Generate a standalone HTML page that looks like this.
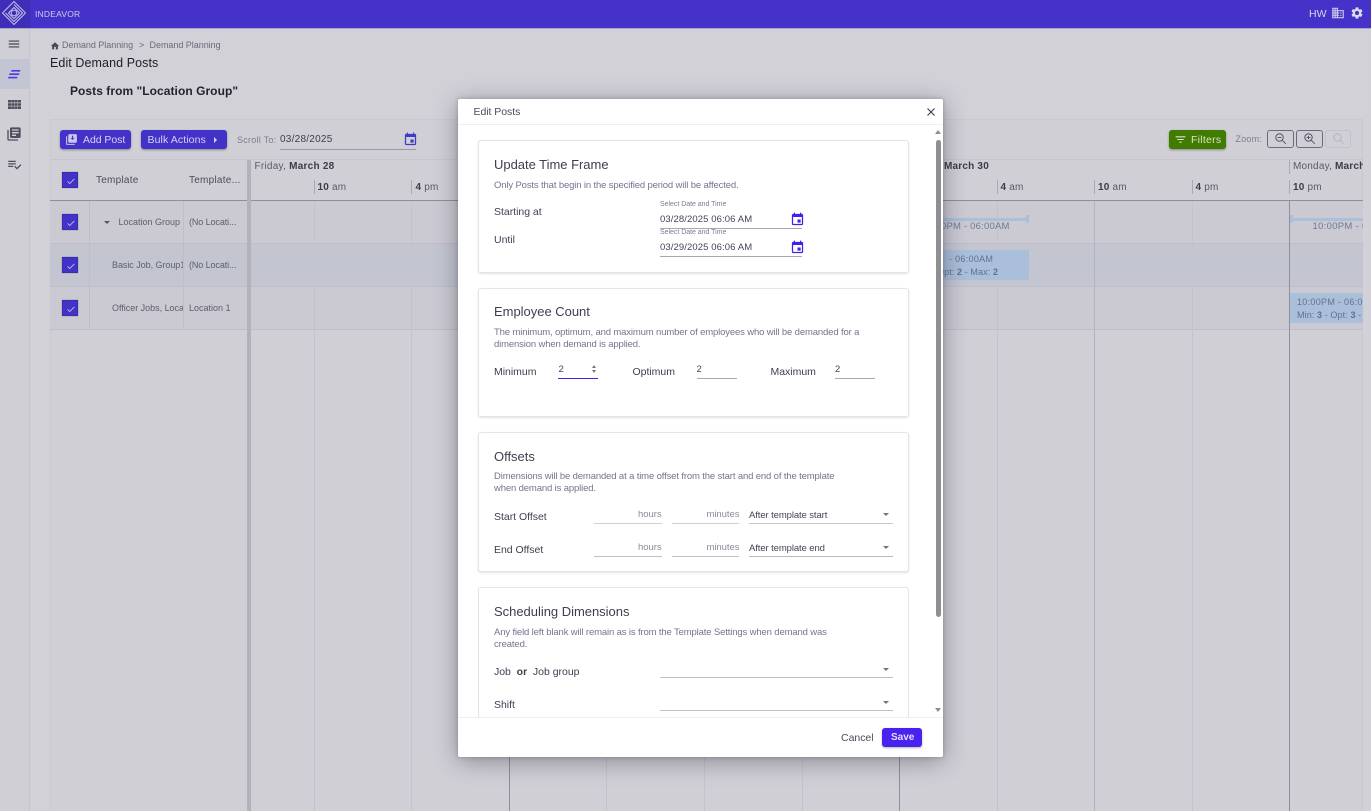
<!DOCTYPE html>
<html><head><meta charset="utf-8"><title>Edit Demand Posts</title>
<style>
html,body{margin:0;padding:0}
body{width:1371px;height:811px;position:relative;overflow:hidden;background:#d2d1d8;font-family:"Liberation Sans",sans-serif;color:#3e3d4d}
.a{position:absolute}
.t{position:absolute;white-space:nowrap;line-height:14px}
.l{position:absolute}
svg{position:absolute;display:block}
.chk{position:absolute;left:62px;width:16px;height:16px;background:#4332c8;border:.5px solid #3a2cac;box-shadow:0 0 1px #777;box-sizing:border-box}
.chk svg{left:2.500px;top:2.500px}
.card{position:absolute;left:478px;width:431px;background:#fff;border:1px solid #e3e3e8;box-shadow:0 1px 2px rgba(0,0,0,.12);border-radius:3px;box-sizing:border-box}
.h{font-size:13px;color:#3f3e50;letter-spacing:-.02px}
.d{font-size:9.500px;color:#73748f;letter-spacing:-.14px}
.lb{font-size:10.500px;color:#3f3e50;letter-spacing:-.02px}
.v{font-size:9.500px;color:#44435a;letter-spacing:.1px}
.u{position:absolute;height:1px;background:#a8a8b4}
.ph{font-size:9.500px;color:#8b8b9b;letter-spacing:-.05px}
.sel{position:absolute;width:0;height:0;border-left:3.500px solid transparent;border-right:3.500px solid transparent;border-top:3.500px solid #74747f}
.g{background:#c4c3cd}
.gd{background:#8f8e9a}
.bt{position:absolute;background:#4332c8;border-radius:3px;box-shadow:0 1px 2px rgba(0,0,0,.35);color:#d6d3ef;font-size:10.500px}
</style></head><body>

<!-- top bar -->
<div class="a" style="left:0;top:0;width:1371px;height:29px;background:#4432c9;border-bottom:1px solid #a9a6cb;box-sizing:border-box"></div>
<div class="a" style="left:0;top:0;width:30px;height:29px;background:#3f2fb6;border-bottom:1px solid #a9a6cb;box-sizing:border-box"></div>
<svg style="left:1px;top:0" width="26" height="26" viewBox="0 0 26 26" fill="none" stroke="#c9c6e8" stroke-width=".9" stroke-linejoin="round">
<path d="M13 1.500L24.500 13 13 24.500 1.500 13zM13 4.500L21.500 13 13 21.500 4.500 13"/>
<path d="M13 7.500L18.500 13 13 18.500 7.500 13z"/><circle cx="13" cy="13" r="2.800"/></svg>
<div class="t" style="left:35px;top:7px;font-size:8.500px;color:#d0ccee;letter-spacing:.2px">INDEAVOR</div>
<div class="t" style="left:1309px;top:7px;font-size:10.500px;color:#d8d5f0">HW</div>
<svg style="left:1331px;top:6px" width="14" height="14" viewBox="0 0 24 24" fill="#c9c6ea"><path d="M12 7V3H2v18h20V7H12zM6 19H4v-2h2v2zm0-4H4v-2h2v2zm0-4H4V9h2v2zm0-4H4V5h2v2zm4 12H8v-2h2v2zm0-4H8v-2h2v2zm0-4H8V9h2v2zm0-4H8V5h2v2zm10 12h-8v-2h2v-2h-2v-2h2v-2h-2V9h8v10zm-2-8h-2v2h2v-2zm0 4h-2v2h2v-2z"/></svg>
<svg style="left:1350px;top:6px" width="14" height="14" viewBox="0 0 24 24" fill="#dddaf3"><path d="M19.140 12.940c.04-.3.06-.61.06-.94 0-.32-.02-.64-.07-.94l2.030-1.580c.18-.14.23-.41.12-.61l-1.920-3.320c-.12-.22-.37-.29-.59-.22l-2.390.96c-.5-.38-1.030-.7-1.620-.94l-.36-2.540c-.04-.24-.24-.41-.48-.41h-3.840c-.24 0-.43.17-.47.41l-.36 2.540c-.59.24-1.130.57-1.620.94l-2.390-.96c-.22-.08-.47 0-.59.22L2.740 8.870c-.12.21-.08.47.12.61l2.030 1.580c-.05.3-.09.63-.09.94s.02.64.07.94l-2.030 1.580c-.18.14-.23.41-.12.61l1.920 3.320c.12.22.37.29.59.22l2.390-.96c.5.38 1.030.7 1.620.94l.36 2.540c.05.24.24.41.48.41h3.840c.24 0 .44-.17.47-.41l.36-2.540c.59-.24 1.130-.56 1.620-.94l2.390.96c.22.08.47 0 .59-.22l1.920-3.320c.12-.22.07-.47-.12-.61l-2.010-1.580zM12 15.600c-1.980 0-3.600-1.620-3.600-3.600s1.620-3.600 3.600-3.600 3.600 1.620 3.600 3.600-1.620 3.600-3.600 3.600z"/></svg>

<!-- sidebar -->
<div class="a" style="left:0;top:29px;width:30px;height:782px;background:#d0cfd6;border-right:1px solid #c6c5cd;box-sizing:border-box"></div>
<div class="a" style="left:0;top:59px;width:30px;height:30px;background:#c4c5d4"></div>
<svg style="left:7px;top:37px" width="14" height="14" viewBox="0 0 24 24" fill="#45444f"><path d="M3 18h18v-2H3v2zm0-5h18v-2H3v2zm0-7v2h18V6H3z"/></svg>
<svg style="left:8px;top:70px" width="13" height="9" viewBox="0 0 13 9" fill="#4a3ae0"><path d="M3.500 0h9l-.5 1.600H3zM1.500 3.400h10l-.5 1.600H1zM.5 6.800h9L9 8.400H0z"/></svg>
<svg style="left:8px;top:100px" width="13" height="9" viewBox="0 0 13 9" fill="#4f4e5c"><path d="M0 0h3v2.500H0zM3.300 0h3v2.500h-3zM6.600 0h3v2.500h-3zM10 0h3v2.500h-3zM0 3.200h3v2.500H0zM3.300 3.200h3v2.500h-3zM6.600 3.200h3v2.500h-3zM10 3.200h3v2.500h-3zM0 6.400h3V9H0zM3.300 6.400h3V9h-3zM6.600 6.400h3V9h-3zM10 6.400h3V9h-3z"/></svg>
<svg style="left:6px;top:126px" width="16" height="16" viewBox="0 0 24 24" fill="#4f4e5c"><path d="M4 6H2v14c0 1.100.9 2 2 2h14v-2H4V6zm16-4H8c-1.100 0-2 .9-2 2v12c0 1.100.9 2 2 2h12c1.100 0 2-.9 2-2V4c0-1.100-.9-2-2-2zm-1 9H9V9h10v2zm-4 4H9v-2h6v2zm4-8H9V5h10v2z"/></svg>
<svg style="left:7px;top:157px" width="15" height="15" viewBox="0 0 24 24" fill="#4f4e5c"><path d="M14 10H2v2h12v-2zm0-4H2v2h12V6zM2 16h8v-2H2v2zm19.500-4.500L23 13l-6.990 7-4.510-4.500L13 14l3.010 3 5.490-5.500z"/></svg>

<!-- breadcrumbs -->
<svg style="left:49.500px;top:40.500px" width="10" height="10" viewBox="0 0 24 24" fill="#4c4b58"><path d="M10 20v-6h4v6h5v-8h3L12 3 2 12h3v8z"/></svg>
<div class="t" style="left:62px;top:38px;font-size:9px;color:#6a6a79;letter-spacing:-.03px">Demand Planning</div>
<div class="t" style="left:139px;top:38px;font-size:9px;color:#6a6a79">&gt;</div>
<div class="t" style="left:149.500px;top:38px;font-size:9px;color:#6a6a79;letter-spacing:-.03px">Demand Planning</div>
<div class="t" style="left:50px;top:56px;font-size:12.500px;color:#1f1e26;letter-spacing:.08px">Edit Demand Posts</div>
<div class="t" style="left:70px;top:84px;font-size:12px;font-weight:bold;color:#24232b;letter-spacing:.05px">Posts from "Location Group"</div>

<!-- panel -->
<div class="a" style="left:50px;top:119px;width:1313px;height:692px;background:#d0cfd6;border:1px solid #cac9d0;border-width:1px 1px 0 1px;box-sizing:border-box"></div>
<div class="l" style="left:50px;top:159px;width:1313px;height:1px;background:#c7c6ce"></div>

<div class="bt" style="left:60px;top:130px;width:71px;height:18.500px"><span class="t" style="left:23px;top:3px;letter-spacing:-.05px">Add Post</span></div>
<svg style="left:65px;top:133px" width="13" height="13" viewBox="0 0 24 24" fill="#c9c6ea"><path d="M4 6H2v14c0 1.100.9 2 2 2h14v-2H4V6zm16-4H8c-1.100 0-2 .9-2 2v12c0 1.100.9 2 2 2h12c1.100 0 2-.9 2-2V4c0-1.100-.9-2-2-2zm-7 3h2v5l2-1.500 0 1.500-3 3-3-3V8.500L13 10z"/></svg>
<div class="bt" style="left:141px;top:130px;width:86px;height:18.500px"><span class="t" style="left:6.500px;top:3px;letter-spacing:.1px">Bulk Actions</span></div>
<div class="a" style="left:214px;top:136.500px;width:0;height:0;border-top:3px solid transparent;border-bottom:3px solid transparent;border-left:3.500px solid #d6d3ef"></div>
<div class="t" style="left:237px;top:133px;font-size:9px;color:#7c7c8b;letter-spacing:.25px">Scroll To:</div>
<div class="t" style="left:280px;top:133px;font-size:10px;color:#3f3e4b;letter-spacing:.25px">03/28/2025</div>
<div class="u" style="left:280px;top:149px;width:136px;background:#9a99a5"></div>
<svg style="left:403px;top:132px" width="15" height="15" viewBox="0 0 24 24" fill="#3f3bc7"><path d="M17 12h-5v5h5v-5zM16 1v2H8V1H6v2H5c-1.110 0-1.990.9-1.990 2L3 19c0 1.100.89 2 2 2h14c1.100 0 2-.9 2-2V5c0-1.100-.9-2-2-2h-1V1h-2zm3 18H5V8h14v11z"/></svg>

<div class="a" style="left:1169px;top:130px;width:57px;height:19px;background:#417c00;border-radius:3px;box-shadow:0 1px 2px rgba(0,0,0,.35)"></div>
<svg style="left:1174px;top:133px" width="13" height="13" viewBox="0 0 24 24" fill="#d7e4c8"><path d="M10 18h4v-2h-4v2zM3 6v2h18V6H3zm3 7h12v-2H6v2z"/></svg>
<div class="t" style="left:1191px;top:133px;font-size:10.500px;color:#d7e4c8;letter-spacing:.25px">Filters</div>
<div class="t" style="left:1235.500px;top:132px;font-size:9px;color:#7c7c8b;letter-spacing:.2px">Zoom:</div>
<div class="a" style="left:1267px;top:130px;width:27px;height:18px;border:1px solid #6c6b7e;border-radius:3px;box-sizing:border-box"></div>
<div class="a" style="left:1296px;top:130px;width:27px;height:18px;border:1px solid #6c6b7e;border-radius:3px;box-sizing:border-box"></div>
<div class="a" style="left:1325px;top:130px;width:26px;height:18px;border:1px solid #c2c1ca;border-radius:3px;box-sizing:border-box"></div>
<svg style="left:1274px;top:132px" width="13" height="13" viewBox="0 0 13 13" fill="none" stroke="#55546a" stroke-width="1"><circle cx="5.500" cy="5.500" r="3.700"/><path d="M8.300 8.300l3.500 3.500M3.700 5.500h3.600"/></svg>
<svg style="left:1303px;top:132px" width="13" height="13" viewBox="0 0 13 13" fill="none" stroke="#55546a" stroke-width="1"><circle cx="5.500" cy="5.500" r="3.700"/><path d="M8.300 8.300l3.500 3.500M3.700 5.500h3.600M5.500 3.700v3.600"/></svg>
<svg style="left:1332px;top:132px" width="13" height="13" viewBox="0 0 13 13" fill="none" stroke="#b4b3bf" stroke-width="1"><circle cx="5.500" cy="5.500" r="3.700"/><path d="M8.300 8.300l3.500 3.500"/></svg>

<!-- grid rows -->
<div class="a" style="left:50px;top:201px;width:1313px;height:42px;background:#cbc9d2"></div>
<div class="a" style="left:50px;top:244px;width:1313px;height:42px;background:#c3c6d1"></div>
<div class="a" style="left:50px;top:287px;width:1313px;height:42px;background:#cbc9d2"></div>
<div class="l" style="left:50px;top:200px;width:1313px;height:1px;background:#8f8e9a"></div>
<div class="l" style="left:50px;top:243px;width:1313px;height:1px;background:#bebdc8"></div>
<div class="l" style="left:50px;top:286px;width:1313px;height:1px;background:#bebdc8"></div>
<div class="l" style="left:50px;top:329px;width:1313px;height:1px;background:#bebdc8"></div>
<div class="l" style="left:89px;top:201px;width:1px;height:128px;background:#bebdc8"></div>
<div class="l" style="left:183px;top:201px;width:1px;height:128px;background:#bebdc8"></div>
<div class="a" style="left:247px;top:160px;width:4px;height:651px;background:#b3b2bb"></div>

<!-- vertical grid lines -->
<div class="l g" style="left:314px;top:201px;width:1px;height:610px"></div>
<div class="l g" style="left:411px;top:201px;width:1px;height:610px"></div>
<div class="l gd" style="left:509px;top:201px;width:1px;height:610px"></div>
<div class="l g" style="left:606px;top:201px;width:1px;height:610px"></div>
<div class="l g" style="left:704px;top:201px;width:1px;height:610px"></div>
<div class="l g" style="left:802px;top:201px;width:1px;height:610px"></div>
<div class="l gd" style="left:899px;top:201px;width:1px;height:610px"></div>
<div class="l g" style="left:997px;top:201px;width:1px;height:610px"></div>
<div class="l" style="left:1094px;top:201px;width:1px;height:610px;background:#b3b2c0"></div>
<div class="l g" style="left:1192px;top:201px;width:1px;height:610px"></div>
<div class="l gd" style="left:1289px;top:201px;width:1px;height:610px"></div>
<div class="l" style="left:314px;top:180px;width:1px;height:14px;background:#a9a8b3"></div>
<div class="l" style="left:411px;top:180px;width:1px;height:14px;background:#a9a8b3"></div>
<div class="l" style="left:997px;top:180px;width:1px;height:14px;background:#a9a8b3"></div>
<div class="l" style="left:1094px;top:180px;width:1px;height:14px;background:#a9a8b3"></div>
<div class="l" style="left:1192px;top:180px;width:1px;height:14px;background:#a9a8b3"></div>
<div class="l" style="left:1289px;top:180px;width:1px;height:14px;background:#a9a8b3"></div>
<div class="l" style="left:1289px;top:160px;width:1px;height:14px;background:#a9a8b3"></div>

<!-- left headers and cells -->
<div class="chk" style="top:172px"><svg width="10" height="10" viewBox="0 0 24 24" fill="none" stroke="#c9c6ea" stroke-width="2"><path d="M4 13l5 5L20 7"/></svg></div>
<div class="chk" style="top:214px"><svg width="10" height="10" viewBox="0 0 24 24" fill="none" stroke="#c9c6ea" stroke-width="2"><path d="M4 13l5 5L20 7"/></svg></div>
<div class="chk" style="top:257px"><svg width="10" height="10" viewBox="0 0 24 24" fill="none" stroke="#c9c6ea" stroke-width="2"><path d="M4 13l5 5L20 7"/></svg></div>
<div class="chk" style="top:300px"><svg width="10" height="10" viewBox="0 0 24 24" fill="none" stroke="#c9c6ea" stroke-width="2"><path d="M4 13l5 5L20 7"/></svg></div>
<div class="t" style="left:96px;top:174px;font-size:10px;color:#4c4b59;letter-spacing:.25px">Template</div>
<div class="t" style="left:189px;top:174px;font-size:10px;color:#4c4b59;letter-spacing:.25px">Template...</div>
<div class="sel" style="left:104px;top:220.500px;border-top-color:#55545f"></div>
<div class="t" style="left:118.500px;top:215px;font-size:9px;color:#5e5d6c;letter-spacing:0">Location Group</div>
<div class="t" style="left:189px;top:215px;font-size:9px;color:#5e5d6c;letter-spacing:-.1px">(No Locati...</div>
<div class="t" style="left:112px;top:258px;font-size:9px;color:#5e5d6c;letter-spacing:-.05px;width:71px;overflow:hidden">Basic Job, Group1</div>
<div class="t" style="left:189px;top:258px;font-size:9px;color:#5e5d6c;letter-spacing:-.1px">(No Locati...</div>
<div class="t" style="left:112px;top:301px;font-size:9px;color:#5e5d6c;letter-spacing:-.02px;width:71px;overflow:hidden">Officer Jobs, Location 1</div>
<div class="t" style="left:189px;top:301px;font-size:9px;color:#5e5d6c;letter-spacing:0">Location 1</div>

<!-- timeline headers -->
<div class="t" style="left:254.500px;top:160px;font-size:10px;color:#5a5967;letter-spacing:.25px">Friday, <b style="color:#3c3b47">March 28</b></div>
<div class="t" style="left:317.500px;top:181px;font-size:10px;color:#5a5967;letter-spacing:.2px"><b style="color:#3c3b47">10</b> am</div>
<div class="t" style="left:415.500px;top:181px;font-size:10px;color:#5a5967;letter-spacing:.2px"><b style="color:#3c3b47">4</b> pm</div>
<div class="t" style="left:944px;top:160px;font-size:10px;font-weight:bold;color:#3c3b47;letter-spacing:.2px">March 30</div>
<div class="t" style="left:1000.500px;top:181px;font-size:10px;color:#5a5967;letter-spacing:.2px"><b style="color:#3c3b47">4</b> am</div>
<div class="t" style="left:1098px;top:181px;font-size:10px;color:#5a5967;letter-spacing:.2px"><b style="color:#3c3b47">10</b> am</div>
<div class="t" style="left:1195.500px;top:181px;font-size:10px;color:#5a5967;letter-spacing:.2px"><b style="color:#3c3b47">4</b> pm</div>
<div class="t" style="left:1293px;top:181px;font-size:10px;color:#5a5967;letter-spacing:.2px"><b style="color:#3c3b47">10</b> pm</div>
<div class="t" style="left:1293px;top:160px;width:70px;overflow:hidden;font-size:10px;color:#5a5967;letter-spacing:.2px">Monday, <b style="color:#3c3b47">March 31</b></div>

<!-- events -->
<div class="a" style="left:930px;top:218px;width:98px;height:3px;background:#a9bfda"></div>
<div class="a" style="left:1026px;top:215px;width:3px;height:8px;background:#a9bfda"></div>
<div class="t" style="left:941px;top:219.500px;font-size:9.500px;color:#6f7a95;letter-spacing:.2px">0PM - 06:00AM</div>
<div class="a" style="left:1290px;top:218px;width:73px;height:3px;background:#a9bfda"></div>
<div class="a" style="left:1290px;top:215px;width:3px;height:8px;background:#a9bfda"></div>
<div class="t" style="left:1312.500px;top:219.500px;width:50px;overflow:hidden;font-size:9.500px;color:#6f7a95;letter-spacing:.3px">10:00PM - 06:00AM</div>
<div class="a" style="left:930px;top:250px;width:99px;height:30px;background:#a9bfda;border-radius:1px"></div>
<div class="t" style="left:949px;top:252px;font-size:9px;color:#64708e;letter-spacing:.3px">- 06:00AM</div>
<div class="t" style="left:937px;top:265px;font-size:9px;color:#64708e;letter-spacing:.1px">Opt: <b>2</b> - Max: <b>2</b></div>
<div class="a" style="left:1290px;top:293px;width:73px;height:30px;background:#a9bfda;border-radius:1px"></div>
<div class="t" style="left:1297px;top:295px;width:66px;overflow:hidden;font-size:9px;color:#64708e;letter-spacing:.3px">10:00PM - 06:00AM</div>
<div class="t" style="left:1297px;top:308px;width:66px;overflow:hidden;font-size:9px;color:#64708e;letter-spacing:.1px">Min: <b>3</b> - Opt: <b>3</b> - Max: <b>3</b></div>

<!-- modal -->
<div class="a" style="left:458px;top:99px;width:485px;height:658px;background:#fff;box-shadow:0 4px 24px rgba(40,38,55,.42),0 0 4px rgba(40,38,55,.25);border-radius:2px;overflow:hidden">
  <div class="l" style="left:0;top:25px;width:485px;height:1px;background:#efeff2"></div>
  <div class="l" style="left:0;top:618px;width:485px;height:1px;background:#efeff2"></div>
</div>
<div class="t" style="left:473.500px;top:105px;font-size:10.500px;color:#4c4b5b;letter-spacing:-.05px">Edit Posts</div>
<svg style="left:926px;top:107px" width="10" height="10" viewBox="0 0 10 10" fill="none" stroke="#3d3c48" stroke-width="1.100"><path d="M1.500 1.500l7 7M8.500 1.500l-7 7"/></svg>

<!-- scrollbar -->
<div class="a" style="left:935.500px;top:139.500px;width:5px;height:477px;background:#8f8f92;border-radius:2.500px"></div>
<div class="a" style="left:934.500px;top:130px;width:0;height:0;border-left:3.500px solid transparent;border-right:3.500px solid transparent;border-bottom:4px solid #8f8f92"></div>
<div class="a" style="left:934.500px;top:708px;width:0;height:0;border-left:3.500px solid transparent;border-right:3.500px solid transparent;border-top:4px solid #8f8f92"></div>

<!-- card 1 -->
<div class="card" style="top:140px;height:133px"></div>
<div class="t h" style="left:494px;top:158px">Update Time Frame</div>
<div class="t d" style="left:494px;top:178.500px">Only Posts that begin in the specified period will be affected.</div>
<div class="t lb" style="left:494px;top:205px">Starting at</div>
<div class="t lb" style="left:494px;top:233px">Until</div>
<div class="t" style="left:660px;top:198px;font-size:7px;line-height:14px;color:#7b7b8d;letter-spacing:-.03px">Select Date and Time</div>
<div class="t v" style="left:660px;top:213px">03/28/2025 06:06 AM</div>
<div class="u" style="left:660px;top:228px;width:142px"></div>
<svg style="left:790px;top:212px" width="15" height="15" viewBox="0 0 24 24" fill="#3f22ee"><path d="M17 12h-5v5h5v-5zM16 1v2H8V1H6v2H5c-1.110 0-1.990.9-1.990 2L3 19c0 1.100.89 2 2 2h14c1.100 0 2-.9 2-2V5c0-1.100-.9-2-2-2h-1V1h-2zm3 18H5V8h14v11z"/></svg>
<div class="t" style="left:660px;top:226px;font-size:7px;line-height:14px;color:#7b7b8d;letter-spacing:-.03px">Select Date and Time</div>
<div class="t v" style="left:660px;top:241px">03/29/2025 06:06 AM</div>
<div class="u" style="left:660px;top:256px;width:142px"></div>
<svg style="left:790px;top:240px" width="15" height="15" viewBox="0 0 24 24" fill="#3f22ee"><path d="M17 12h-5v5h5v-5zM16 1v2H8V1H6v2H5c-1.110 0-1.990.9-1.990 2L3 19c0 1.100.89 2 2 2h14c1.100 0 2-.9 2-2V5c0-1.100-.9-2-2-2h-1V1h-2zm3 18H5V8h14v11z"/></svg>

<!-- card 2 -->
<div class="card" style="top:288px;height:129px"></div>
<div class="t h" style="left:494px;top:305px">Employee Count</div>
<div class="t d" style="left:494px;top:325.500px">The minimum, optimum, and maximum number of employees who will be demanded for a</div>
<div class="t d" style="left:494px;top:338px">dimension when demand is applied.</div>
<div class="t lb" style="left:494px;top:365px">Minimum</div>
<div class="t v" style="left:558.500px;top:363px">2</div>
<div class="a" style="left:591.500px;top:365px;width:0;height:0;border-left:2.500px solid transparent;border-right:2.500px solid transparent;border-bottom:3px solid #77777f"></div>
<div class="a" style="left:591.500px;top:370px;width:0;height:0;border-left:2.500px solid transparent;border-right:2.500px solid transparent;border-top:3px solid #77777f"></div>
<div class="u" style="left:558px;top:378px;width:40px;background:#3f22ee"></div>
<div class="t lb" style="left:632.500px;top:365px">Optimum</div>
<div class="t v" style="left:696.500px;top:363px">2</div>
<div class="u" style="left:697px;top:378px;width:40px"></div>
<div class="t lb" style="left:770.500px;top:365px">Maximum</div>
<div class="t v" style="left:835px;top:363px">2</div>
<div class="u" style="left:835px;top:378px;width:40px"></div>

<!-- card 3 -->
<div class="card" style="top:432px;height:140px"></div>
<div class="t h" style="left:494px;top:450px">Offsets</div>
<div class="t d" style="left:494px;top:469.500px">Dimensions will be demanded at a time offset from the start and end of the template</div>
<div class="t d" style="left:494px;top:482px">when demand is applied.</div>
<div class="t lb" style="left:494px;top:509.500px">Start Offset</div>
<div class="t ph" style="left:638px;top:508px">hours</div>
<div class="u" style="left:594px;top:523px;width:68px;background:#d0d0d6"></div>
<div class="t ph" style="left:706.500px;top:508px">minutes</div>
<div class="u" style="left:672px;top:523px;width:67px;background:#d0d0d6"></div>
<div class="t v" style="left:749px;top:508.500px;letter-spacing:-.1px">After template start</div>
<div class="u" style="left:749px;top:523px;width:144px;background:#c8c8d0"></div>
<div class="sel" style="left:882.500px;top:513px"></div>
<div class="t lb" style="left:494px;top:542.500px">End Offset</div>
<div class="t ph" style="left:638px;top:541px">hours</div>
<div class="u" style="left:594px;top:556px;width:68px;background:#c0c0c8"></div>
<div class="t ph" style="left:706.500px;top:541px">minutes</div>
<div class="u" style="left:672px;top:556px;width:67px;background:#c0c0c8"></div>
<div class="t v" style="left:749px;top:541.500px;letter-spacing:-.1px">After template end</div>
<div class="u" style="left:749px;top:556px;width:144px;background:#b8b8c2"></div>
<div class="sel" style="left:882.500px;top:546px"></div>

<!-- card 4 -->
<div class="card" style="top:587px;height:130px;border-bottom:0;border-radius:3px 3px 0 0;box-shadow:none"></div>
<div class="t h" style="left:494px;top:605px">Scheduling Dimensions</div>
<div class="t d" style="left:494px;top:625.500px">Any field left blank will remain as is from the Template Settings when demand was</div>
<div class="t d" style="left:494px;top:638px">created.</div>
<div class="t lb" style="left:494px;top:664.500px">Job &nbsp;<b>or</b>&nbsp; Job group</div>
<div class="u" style="left:660px;top:677px;width:233px;background:#c0c0c8"></div>
<div class="sel" style="left:882.500px;top:668px"></div>
<div class="t lb" style="left:494px;top:697.500px">Shift</div>
<div class="u" style="left:660px;top:710px;width:233px;background:#c0c0c8"></div>
<div class="sel" style="left:882.500px;top:701px"></div>

<!-- footer -->
<div class="t" style="left:841px;top:731px;font-size:10.500px;color:#4c4b5b;letter-spacing:-.02px">Cancel</div>
<div class="a" style="left:882px;top:728px;width:40px;height:19px;background:#4a22ee;border-radius:3px;box-shadow:0 1px 2px rgba(0,0,0,.3)"></div>
<div class="t" style="left:891px;top:731px;font-size:10px;font-weight:bold;color:#e2dcfb">Save</div>

</body></html>
